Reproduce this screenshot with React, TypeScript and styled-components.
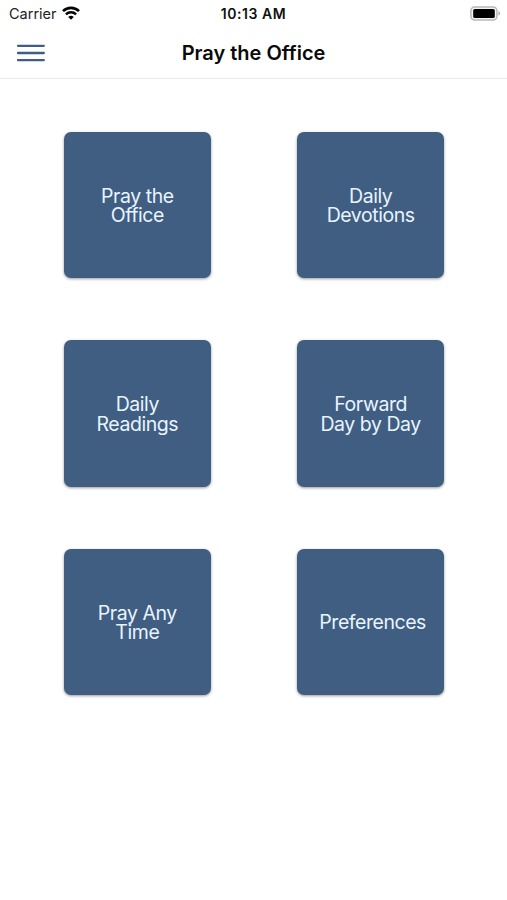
import styled, { createGlobalStyle } from "styled-components";

const primaryColor = "#3f5e82";

const tiles = [
  { id: "office", title: "Pray the Office" },
  { id: "devotions", title: "Daily Devotions" },
  { id: "readings", title: "Daily Readings" },
  { id: "forward", title: "Forward Day by Day" },
  { id: "any-time", title: "Pray Any Time" },
  { id: "preferences", title: "Preferences" },
];

const WifiIcon = () => (
  <svg width="18" height="14" viewBox="0 0 18 14" fill="none" stroke="#050505">
    <path d="M1 5.1a11.4 11.4 0 0 1 16 0" strokeWidth="2.7" />
    <path d="M3.9 8.4a7.2 7.2 0 0 1 10.2 0" strokeWidth="2.4" />
    <path d="M9 13.8 6.2 11a4 4 0 0 1 5.6 0z" fill="#050505" stroke="none" />
  </svg>
);

const BatteryIcon = () => (
  <svg width="31" height="15" viewBox="0 0 31 15">
    <rect x="0.9" y="0.9" width="26" height="13.2" rx="3.8" fill="#f4f4f4" stroke="#b8b8b8" strokeWidth="1.5" />
    <rect x="3.2" y="3" width="21.6" height="9" rx="1.6" fill="#000" />
    <path d="M28.4 5.3v4.4c1-.4 1.7-1.2 1.7-2.2s-.7-1.8-1.7-2.2z" fill="#aaa" />
  </svg>
);

const MenuIcon = () => (
  <svg width="29" height="18" viewBox="0 0 29 18" stroke={primaryColor} strokeWidth="2.3" strokeLinecap="round">
    <path d="M2 1.8h25.8M2 9h25.8M2 16.2h25.8" />
  </svg>
);

const App = () => {
  return (
    <>
      <GlobalStyle />
      <Screen>
        <StatusBar>
          <Carrier>
            <span>Carrier</span>
            <WifiIcon />
          </Carrier>
          <Clock>10:13 AM</Clock>
          <Battery>
            <BatteryIcon />
          </Battery>
        </StatusBar>

        <Header>
          <MenuButton aria-label="Menu">
            <MenuIcon />
          </MenuButton>
          <Title>Pray the Office</Title>
        </Header>

        <TileGrid>
          {tiles.map((tile) => (
            <Tile key={tile.id}>
              <TileLabel>{tile.title}</TileLabel>
            </Tile>
          ))}
        </TileGrid>
      </Screen>
    </>
  );
};

export default App;

/* -------- Styles -------- */

const GlobalStyle = createGlobalStyle`
  * {
    box-sizing: border-box;
  }

  body {
    margin: 0;
    background-color: #fff;
    font-family: Inter, "Liberation Sans", sans-serif;
  }
`;

const Screen = styled.div`
  width: 507px;
  height: 900px;
  overflow: hidden;
  background-color: #fff;
`;

const StatusBar = styled.div`
  height: 26px;
  padding: 0 6px 0 9px;
  display: grid;
  grid-template-columns: 1fr auto 1fr;
  align-items: center;
`;

const Carrier = styled.div`
  display: flex;
  align-items: center;
  gap: 5px;
  color: #222;
  font-size: 14.5px;
  line-height: 27px;

  svg {
    margin-top: -1px;
  }
`;

const Clock = styled.div`
  padding-right: 3px;
  color: #111;
  font-size: 14px;
  font-weight: 600;
  line-height: 27px;
  letter-spacing: 0.55px;
`;

const Battery = styled.div`
  display: flex;
  justify-content: flex-end;
`;

const Header = styled.header`
  height: 53px;
  padding: 1px 16px 0;
  border-bottom: 1px solid #ebebeb;
  display: grid;
  grid-template-columns: 1fr auto 1fr;
  align-items: center;
`;

const MenuButton = styled.button`
  width: 29px;
  padding: 1px 0 0;
  border: none;
  background: none;
  display: flex;
  cursor: pointer;
`;

const Title = styled.h1`
  margin: 0;
  color: #0a0a0a;
  font-size: 20px;
  font-weight: 600;
  line-height: 24px;
`;

const TileGrid = styled.main`
  padding: 52.7px 63px 0 64px;
  display: grid;
  grid-template-columns: repeat(2, 146.7px);
  grid-auto-rows: 146.5px;
  justify-content: space-between;
  row-gap: 62px;
`;

const Tile = styled.button`
  padding: 2.6px 22px 0;
  border: none;
  border-radius: 7px;
  background-color: ${primaryColor};
  box-shadow: 0 1px 3px rgba(0, 0, 0, 0.4);
  display: flex;
  align-items: center;
  cursor: pointer;
`;

const TileLabel = styled.span`
  width: 100%;
  color: #e9f4ff;
  font-family: Inter, "Liberation Sans", sans-serif;
  font-size: 19.5px;
  font-weight: 400;
  line-height: 19.6px;
  letter-spacing: -0.45px;
  text-align: center;
`;
